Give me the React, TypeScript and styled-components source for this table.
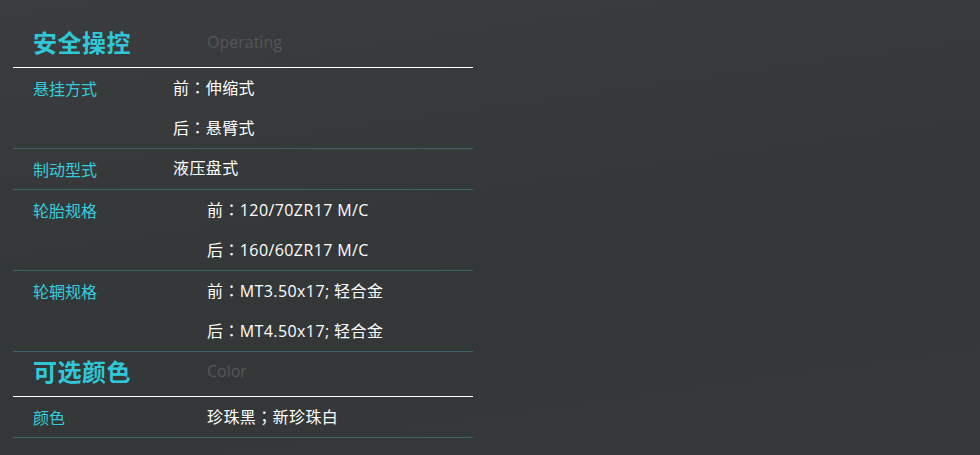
import styled, {createGlobalStyle} from 'styled-components'

type Spec = {
    label: string
    values: string[]
    indent?: boolean
}

const controlSpecs: Spec[] = [
    {label: '悬挂方式', values: ['前：伸缩式', '后：悬臂式']},
    {label: '制动型式', values: ['液压盘式']},
    {label: '轮胎规格', values: ['前：120/70ZR17 M/C', '后：160/60ZR17 M/C'], indent: true},
    {label: '轮辋规格', values: ['前：MT3.50x17; 轻合金', '后：MT4.50x17; 轻合金'], indent: true},
]

const colorSpecs: Spec[] = [{label: '颜色', values: ['珍珠黑；新珍珠白'], indent: true}]

// full-width punctuation sits centred in its cell, like in the original
const renderValue = (text: string) =>
    text.split(/([：；])/).map((part, i) => (part === '：' || part === '；' ? <Punct key={i}>{part}</Punct> : part))

function Section({title, en, specs}: {title: string; en: string; specs: Spec[]}) {
    return (
        <>
            <Header>
                <HeaderTitle>{title}</HeaderTitle>
                <HeaderEn>{en}</HeaderEn>
            </Header>
            {specs.map((spec) => (
                <Row key={spec.label}>
                    <Label>{spec.label}</Label>
                    <Values $indent={spec.indent}>
                        {spec.values.map((v) => (
                            <Value key={v}>{renderValue(v)}</Value>
                        ))}
                    </Values>
                </Row>
            ))}
        </>
    )
}

export default function App() {
    return (
        <Page>
            <GlobalStyle />
            <Panel>
                <Section title="安全操控" en="Operating" specs={controlSpecs} />
                <Section title="可选颜色" en="Color" specs={colorSpecs} />
            </Panel>
        </Page>
    )
}

const GlobalStyle = createGlobalStyle`
    html, body {
        margin: 0;
        padding: 0;
        background: #36383a;
    }
`

const Page = styled.main`
    width: 980px;
    height: 455px;
    overflow: hidden;
    background: linear-gradient(172deg, #3a3c3e 0%, #353839 45%, #343738 70%, #373839 100%);
    padding: 23px 0 0 13px;
    box-sizing: border-box;
    font-family: 'Open Sans', 'Noto Sans CJK SC', sans-serif;
`

const Panel = styled.section`
    width: 460px;
    display: flex;
    flex-direction: column;
`

const Header = styled.div`
    height: 45px;
    display: flex;
    align-items: center;
    padding: 0 0 6px 20px;
    box-sizing: border-box;
    border-bottom: 1px solid #ffffff;
`

const HeaderTitle = styled.h2`
    margin: 0;
    width: 174px;
    font-family: 'Noto Sans CJK SC', sans-serif;
    font-size: 24px;
    font-weight: 700;
    color: #30c8d8;
    line-height: 1;
    letter-spacing: 0.5px;
`

const HeaderEn = styled.span`
    font-size: 16px;
    color: #54565a;
    line-height: 1;
`

const Row = styled.div`
    display: grid;
    grid-template-columns: 140px 1fr;
    padding-left: 20px;
    border-bottom: 1px solid #3e6366;
`

const Label = styled.span`
    height: 40px;
    line-height: 40px;
    font-family: 'Noto Sans CJK SC', sans-serif;
    font-size: 16px;
    color: #34cddd;
`

const Values = styled.div<{$indent?: boolean}>`
    display: flex;
    flex-direction: column;
    padding-left: ${(p) => (p.$indent ? '34px' : '0')};
`

const Value = styled.span`
    height: 40px;
    line-height: 39px;
    font-size: 16px;
    letter-spacing: 0.4px;
    color: #ffffff;
`

const Punct = styled.span`
    font-family: 'Noto Sans CJK JP', sans-serif;
`
